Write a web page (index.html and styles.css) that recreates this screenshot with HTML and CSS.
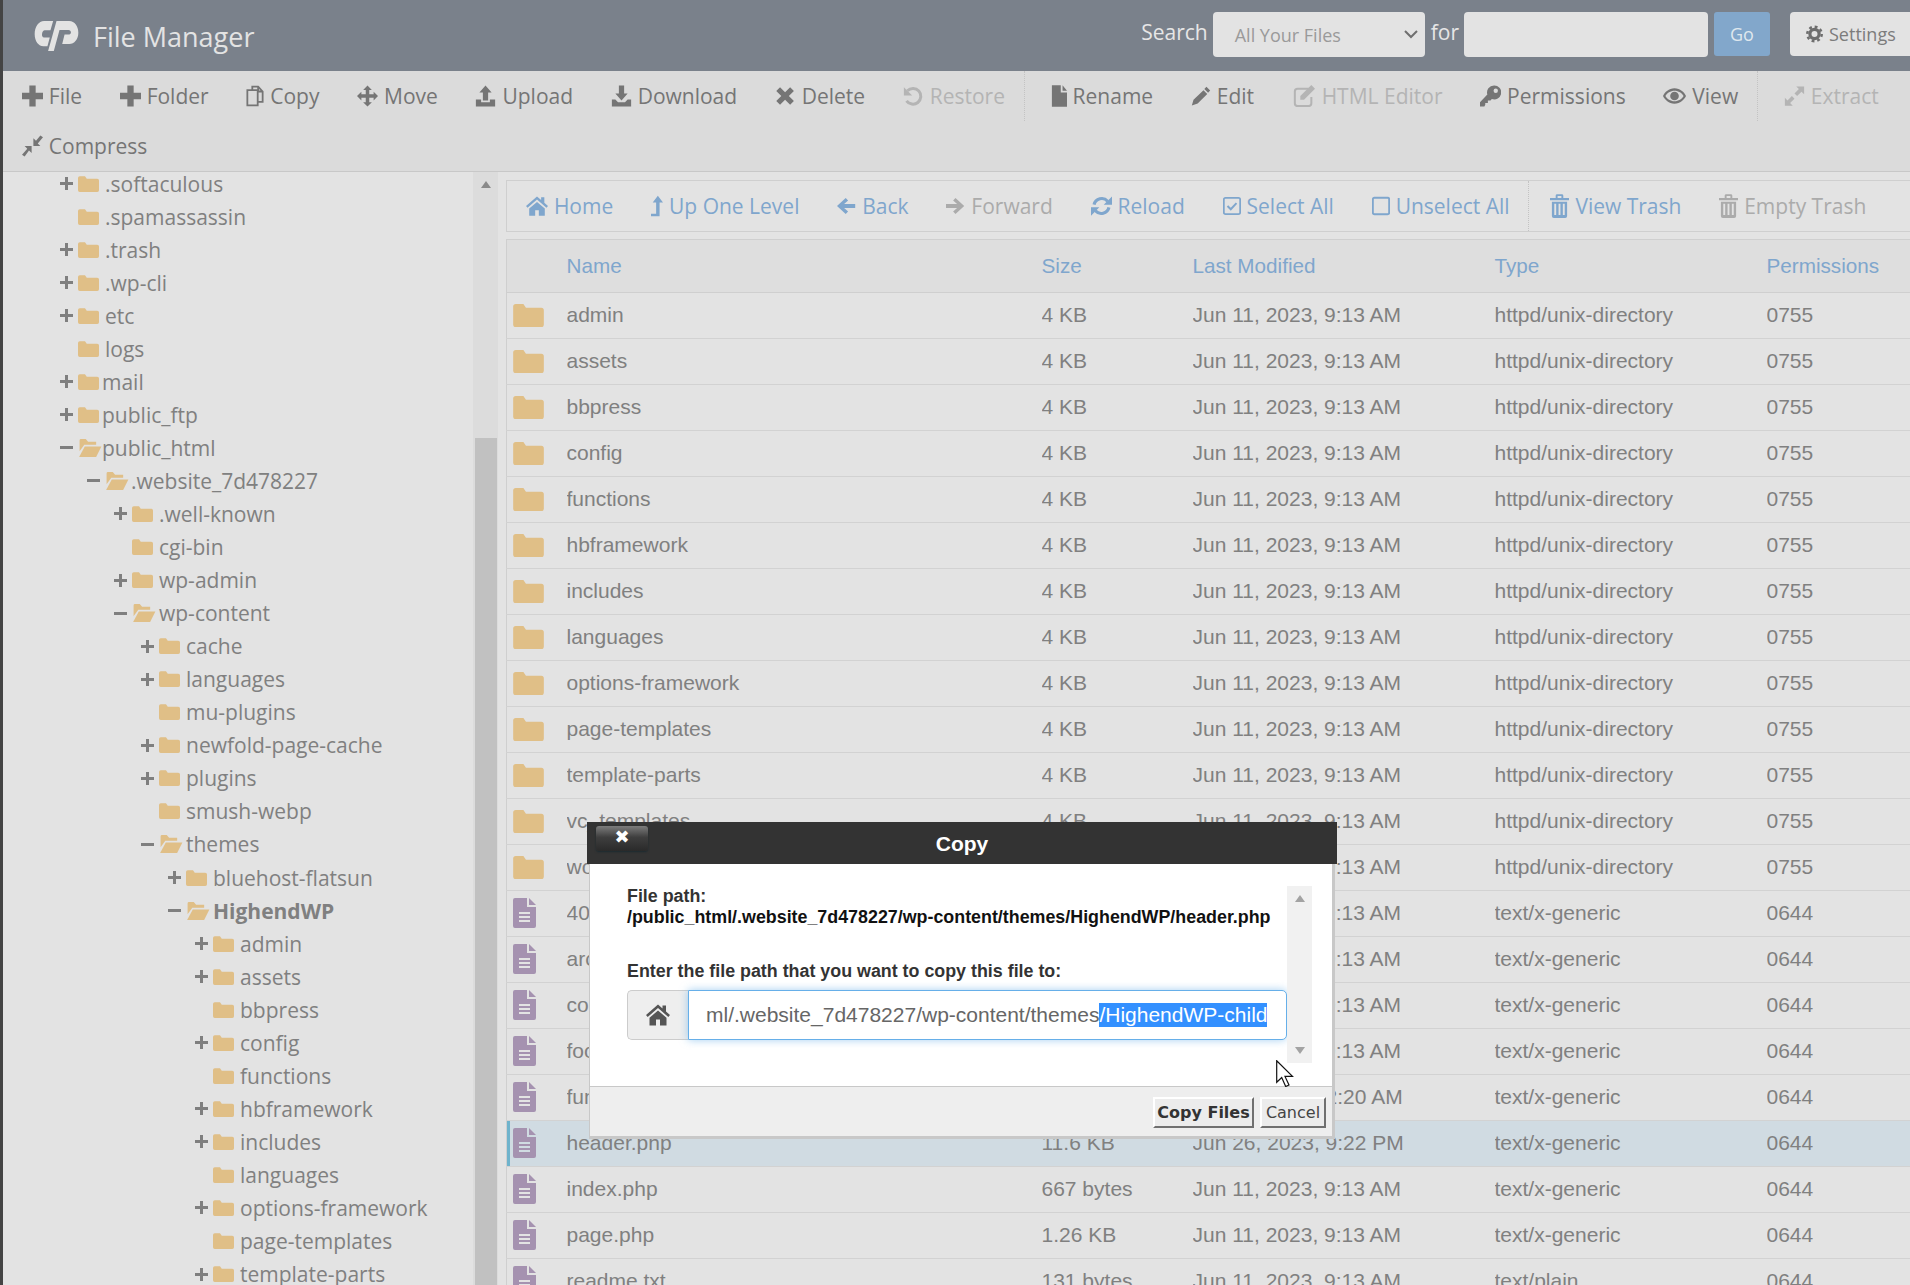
FILE: index.html
```html
<!DOCTYPE html>
<html lang="en">
<head>
<meta charset="utf-8">
<title>File Manager</title>
<link rel="stylesheet" href="styles.css">
</head>
<body>
<svg class="sprite" xmlns="http://www.w3.org/2000/svg">
  <symbol id="plus" viewBox="2 2 20 20"><path d="M9 2h6v7h7v6h-7v7H9v-7H2V9h7z"/></symbol>
  <symbol id="tplus" viewBox="0 0 13 13"><path d="M5 0h3v5h5v3H8v5H5V8H0V5h5z"/></symbol>
  <symbol id="tminus" viewBox="0 0 13 13"><path d="M0 5h13v3H0z"/></symbol>
  <symbol id="copy" viewBox="2 0 20 24"><path d="M9 5V1.500h6.500L20.500 7v11.500H15M15.500 1.500V7h5M3.500 5.500h11.500v17H3.500z" fill="none" stroke="currentColor" stroke-width="2"/></symbol>
  <symbol id="move" viewBox="0 0 24 24"><path d="M12 0l5 5h-3v5h5V7l5 5-5 5v-3h-5v5h3l-5 5-5-5h3v-5H5v3l-5-5 5-5v3h5V5H7z"/></symbol>
  <symbol id="upload" viewBox="0 0 24 24"><path d="M12 0l7 8h-4v9H9V8H5zM1 16h6v3h10v-3h6v8H1z"/></symbol>
  <symbol id="download" viewBox="0 0 24 24"><path d="M9 0h6v9h4l-7 8-7-8h4zM1 16h4l3 3h8l3-3h4v8H1z"/></symbol>
  <symbol id="times" viewBox="0 0 25 25"><path d="M6 2l6 6 6-6 4.500 4.500-6 6 6 6-4.500 4.500-6-6-6 6-4.500-4.500 6-6-6-6z"/></symbol>
  <symbol id="undo" viewBox="1 0 24 24"><path d="M6 6a9 9 0 1 1-1 11.500" fill="none" stroke="currentColor" stroke-width="3.400"/><path d="M2 2v9.500h9.500z"/></symbol>
  <symbol id="file" viewBox="0 0 18 24"><path d="M1 0h10v8h7v16H1zM13 0l5 6h-5z"/></symbol>
  <symbol id="pencil" viewBox="0 0 24 24"><path d="M18.500 1l4.500 4.500-2.500 2.500-4.500-4.500zM15 5l4.500 4.500L8 21l-7 2.500L3 16.500z"/></symbol>
  <symbol id="edit" viewBox="0 0 24 24"><path d="M17 4H5a3 3 0 0 0-3 3v13a3 3 0 0 0 3 3h12a3 3 0 0 0 3-3v-7" fill="none" stroke="currentColor" stroke-width="2.200"/><path d="M20 0l4 4-12 12H8v-4z"/></symbol>
  <symbol id="key" viewBox="0 0 24 24"><path fill-rule="evenodd" d="M16 0a8 8 0 0 0-7.600 10.400L0 19v5h5l1-2v-2h3v-3h3l1.500-1.500A8 8 0 1 0 16 0zm2 3.500a2.500 2.500 0 1 1 0 5 2.500 2.500 0 0 1 0-5z"/></symbol>
  <symbol id="eye" viewBox="0 0 24 16"><path fill-rule="evenodd" d="M12 0C6 0 2 4 0 8c2 4 6 8 12 8s10-4 12-8c-2-4-6-8-12-8zm0 2.500c-4 0-8 2.500-9.500 5.500C4 11 8 13.500 12 13.500S20 11 21.500 8C20 5 16 2.500 12 2.500z"/><circle cx="12" cy="8" r="4.500"/></symbol>
  <symbol id="expand" viewBox="0 0 24 24"><path d="M14 1h9v9l-3-3-5 5-3-3 5-5zM10 23H1v-9l3 3 5-5 3 3-5 5z"/></symbol>
  <symbol id="compress" viewBox="0 0 24 24"><path d="M21 0l3 2-6 7 3 3h-8V3l3 3zM3 24l-3-2 6-7-3-3h8v8l-3-3z"/></symbol>
  <symbol id="home" viewBox="0 1 24 23"><path d="M12 2L0 12.500l1.700 2L12 5.500l10.300 9 1.700-2L20 9V3h-3.500v3z"/><path d="M12 8L3.500 15.300V23H10v-6h4v6h6.500v-7.700z"/></symbol>
  <symbol id="levelup" viewBox="0 0 14 24"><path d="M8 0l6 8h-4v16H0v-3h6V8H2z"/></symbol>
  <symbol id="left" viewBox="0 2 24 21"><path d="M11 2.500L14 5.500 9 10h14v5H9l5 4.500-3 3L0 12.500z"/></symbol>
  <symbol id="right" viewBox="1 2 24 21"><path d="M13 2.500L10 5.500 15 10H1v5h14l-5 4.500 3 3L24 12.500z"/></symbol>
  <symbol id="reload" viewBox="0 0 24 24"><path d="M3.500 10.500A9 9 0 0 1 19 6.500M20.500 13.500A9 9 0 0 1 5 17.500" fill="none" stroke="currentColor" stroke-width="3.600"/><path d="M24 1v9.500h-9.500zM0 23v-9.500h9.500z"/></symbol>
  <symbol id="check" viewBox="1 1 22 22"><rect x="2" y="2" width="20" height="20" rx="2" fill="none" stroke="currentColor" stroke-width="2.200"/><path d="M6.500 12l4 4 7-7.500" fill="none" stroke="currentColor" stroke-width="2.400"/></symbol>
  <symbol id="square" viewBox="1 1 22 22"><rect x="2" y="2" width="20" height="20" rx="2" fill="none" stroke="currentColor" stroke-width="2.400"/></symbol>
  <symbol id="trash" viewBox="0 0 20 25"><path d="M0 4h6V1.500Q6 0 7.500 0h5Q14 0 14 1.500V4h6v2.500H0zM8 2v2h4V2zM2 8h16v15q0 2-2 2H4q-2 0-2-2zM4.500 10v12h2V10zM9 10v12h2V10zM13.500 10v12h2V10z" fill-rule="evenodd"/></symbol>
  <symbol id="cog" viewBox="0 0 24 24"><circle cx="12" cy="12" r="6.500" fill="none" stroke="currentColor" stroke-width="4.500"/><circle cx="12" cy="12" r="10.200" fill="none" stroke="currentColor" stroke-width="3.500" stroke-dasharray="4 4"/></symbol>
  <symbol id="folder" viewBox="0 0 24 18"><path d="M0 2a2 2 0 0 1 2-2h6l2 3h12a2 2 0 0 1 2 2v11a2 2 0 0 1-2 2H2a2 2 0 0 1-2-2z"/></symbol>
  <symbol id="folderopen" viewBox="0 0 24 19"><path d="M1 1.500Q1 0 2.500 0h5L10 3h8.500v3H6L1 13z"/><path d="M6.500 8H24l-5.500 11H.5z"/></symbol>
  <symbol id="doc" viewBox="0 0 23 30"><path fill-rule="evenodd" d="M2 0h12v9h9v19a2 2 0 0 1-2 2H2a2 2 0 0 1-2-2V2a2 2 0 0 1 2-2zM6 14v2h11v-2zM6 18v2h11v-2zM6 22v2h11v-2z"/><path d="M16 0l7 7h-7z"/></symbol>
</svg>

<div class="page">
  <header class="topbar">
    <svg class="logo" viewBox="28 42 134 68" preserveAspectRatio="none"><path d="M85 44H58C42 44 30 56 30 72 30 88 42 98 56 98H68L75 79H58C53 79 51 75 52 71 53 67 56 64 60 64H77z"/><path d="M95 44H133C149 44 160 55 160 69 160 83 148 93 133 93H112L119 73H130C135 73 138 71 138 68 138 65 135 63 131 63H104L87 108H70z"/></svg>
    <h1 class="title">File Manager</h1>
    <form class="search">
      <span class="search-label">Search</span>
      <span class="search-select">All Your Files<svg class="chev" viewBox="0 0 14 9"><path d="M1 1l6 6 6-6" fill="none" stroke="currentColor" stroke-width="2"/></svg></span>
      <span class="search-label for">for</span>
      <span class="search-input"></span>
      <span class="go">Go</span>
    </form>
    <span class="settings"><svg class="ic cog"><use href="#cog"/></svg>Settings</span>
  </header>

  <nav class="toolbar">
    <a class="tool"><svg class="ic"><use href="#plus"/></svg>File</a>
    <a class="tool"><svg class="ic"><use href="#plus"/></svg>Folder</a>
    <a class="tool"><svg class="ic slim"><use href="#copy"/></svg>Copy</a>
    <a class="tool"><svg class="ic"><use href="#move"/></svg>Move</a>
    <a class="tool"><svg class="ic"><use href="#upload"/></svg>Upload</a>
    <a class="tool"><svg class="ic"><use href="#download"/></svg>Download</a>
    <a class="tool"><svg class="ic"><use href="#times"/></svg>Delete</a>
    <a class="tool off"><svg class="ic"><use href="#undo"/></svg>Restore</a>
    <span class="sep"></span>
    <a class="tool"><svg class="ic narrow"><use href="#file"/></svg>Rename</a>
    <a class="tool"><svg class="ic pen"><use href="#pencil"/></svg>Edit</a>
    <a class="tool off"><svg class="ic wide"><use href="#edit"/></svg>HTML Editor</a>
    <a class="tool"><svg class="ic"><use href="#key"/></svg>Permissions</a>
    <a class="tool"><svg class="ic eyeic"><use href="#eye"/></svg>View</a>
    <span class="sep"></span>
    <a class="tool off"><svg class="ic"><use href="#expand"/></svg>Extract</a>
    <a class="tool"><svg class="ic"><use href="#compress"/></svg>Compress</a>
  </nav>

  <main class="main">
    <aside class="tree">
      <ul class="tree-list">
        <li class="node l0"><svg class="tg"><use href="#tplus"/></svg><svg class="fd"><use href="#folder"/></svg><span>.softaculous</span></li>
        <li class="node l0"><span class="tg"></span><svg class="fd"><use href="#folder"/></svg><span>.spamassassin</span></li>
        <li class="node l0"><svg class="tg"><use href="#tplus"/></svg><svg class="fd"><use href="#folder"/></svg><span>.trash</span></li>
        <li class="node l0"><svg class="tg"><use href="#tplus"/></svg><svg class="fd"><use href="#folder"/></svg><span>.wp-cli</span></li>
        <li class="node l0"><svg class="tg"><use href="#tplus"/></svg><svg class="fd"><use href="#folder"/></svg><span>etc</span></li>
        <li class="node l0"><span class="tg"></span><svg class="fd"><use href="#folder"/></svg><span>logs</span></li>
        <li class="node l0 tight"><svg class="tg"><use href="#tplus"/></svg><svg class="fd"><use href="#folder"/></svg><span>mail</span></li>
        <li class="node l0 tight"><svg class="tg"><use href="#tplus"/></svg><svg class="fd"><use href="#folder"/></svg><span>public_ftp</span></li>
        <li class="node l0 open"><svg class="tg"><use href="#tminus"/></svg><svg class="fd"><use href="#folderopen"/></svg><span>public_html</span></li>
        <li class="node l1 open"><svg class="tg"><use href="#tminus"/></svg><svg class="fd"><use href="#folderopen"/></svg><span>.website_7d478227</span></li>
        <li class="node l2"><svg class="tg"><use href="#tplus"/></svg><svg class="fd"><use href="#folder"/></svg><span>.well-known</span></li>
        <li class="node l2"><span class="tg"></span><svg class="fd"><use href="#folder"/></svg><span>cgi-bin</span></li>
        <li class="node l2"><svg class="tg"><use href="#tplus"/></svg><svg class="fd"><use href="#folder"/></svg><span>wp-admin</span></li>
        <li class="node l2 open"><svg class="tg"><use href="#tminus"/></svg><svg class="fd"><use href="#folderopen"/></svg><span>wp-content</span></li>
        <li class="node l3"><svg class="tg"><use href="#tplus"/></svg><svg class="fd"><use href="#folder"/></svg><span>cache</span></li>
        <li class="node l3"><svg class="tg"><use href="#tplus"/></svg><svg class="fd"><use href="#folder"/></svg><span>languages</span></li>
        <li class="node l3"><span class="tg"></span><svg class="fd"><use href="#folder"/></svg><span>mu-plugins</span></li>
        <li class="node l3"><svg class="tg"><use href="#tplus"/></svg><svg class="fd"><use href="#folder"/></svg><span>newfold-page-cache</span></li>
        <li class="node l3"><svg class="tg"><use href="#tplus"/></svg><svg class="fd"><use href="#folder"/></svg><span>plugins</span></li>
        <li class="node l3"><span class="tg"></span><svg class="fd"><use href="#folder"/></svg><span>smush-webp</span></li>
        <li class="node l3 open"><svg class="tg"><use href="#tminus"/></svg><svg class="fd"><use href="#folderopen"/></svg><span>themes</span></li>
        <li class="node l4"><svg class="tg"><use href="#tplus"/></svg><svg class="fd"><use href="#folder"/></svg><span>bluehost-flatsun</span></li>
        <li class="node l4 open current"><svg class="tg"><use href="#tminus"/></svg><svg class="fd"><use href="#folderopen"/></svg><span>HighendWP</span></li>
        <li class="node l5"><svg class="tg"><use href="#tplus"/></svg><svg class="fd"><use href="#folder"/></svg><span>admin</span></li>
        <li class="node l5"><svg class="tg"><use href="#tplus"/></svg><svg class="fd"><use href="#folder"/></svg><span>assets</span></li>
        <li class="node l5"><span class="tg"></span><svg class="fd"><use href="#folder"/></svg><span>bbpress</span></li>
        <li class="node l5"><svg class="tg"><use href="#tplus"/></svg><svg class="fd"><use href="#folder"/></svg><span>config</span></li>
        <li class="node l5"><span class="tg"></span><svg class="fd"><use href="#folder"/></svg><span>functions</span></li>
        <li class="node l5"><svg class="tg"><use href="#tplus"/></svg><svg class="fd"><use href="#folder"/></svg><span>hbframework</span></li>
        <li class="node l5"><svg class="tg"><use href="#tplus"/></svg><svg class="fd"><use href="#folder"/></svg><span>includes</span></li>
        <li class="node l5"><span class="tg"></span><svg class="fd"><use href="#folder"/></svg><span>languages</span></li>
        <li class="node l5"><svg class="tg"><use href="#tplus"/></svg><svg class="fd"><use href="#folder"/></svg><span>options-framework</span></li>
        <li class="node l5"><span class="tg"></span><svg class="fd"><use href="#folder"/></svg><span>page-templates</span></li>
        <li class="node l5"><svg class="tg"><use href="#tplus"/></svg><svg class="fd"><use href="#folder"/></svg><span>template-parts</span></li>
      </ul>
    </aside>
    <div class="tree-scroll"><span class="arrow-up"></span><span class="thumb"></span></div>

    <section class="content">
      <nav class="navbar">
        <a class="tool"><svg class="ic homeic"><use href="#home"/></svg>Home</a>
        <a class="tool"><svg class="ic tiny"><use href="#levelup"/></svg>Up One Level</a>
        <a class="tool"><svg class="ic"><use href="#left"/></svg>Back</a>
        <a class="tool off"><svg class="ic"><use href="#right"/></svg>Forward</a>
        <a class="tool"><svg class="ic reloadic"><use href="#reload"/></svg>Reload</a>
        <a class="tool"><svg class="ic boxic"><use href="#check"/></svg>Select All</a>
        <a class="tool"><svg class="ic boxic"><use href="#square"/></svg>Unselect All</a>
        <span class="sep short"></span>
        <a class="tool"><svg class="ic tall"><use href="#trash"/></svg>View Trash</a>
        <a class="tool off"><svg class="ic tall"><use href="#trash"/></svg>Empty Trash</a>
      </nav>
      <table class="files">
        <colgroup><col class="c-ic"><col class="c-name"><col class="c-size"><col class="c-date"><col class="c-type"><col class="c-perm"></colgroup>
        <thead><tr><th></th><th>Name</th><th>Size</th><th>Last Modified</th><th>Type</th><th>Permissions</th></tr></thead>
        <tbody>
          <tr><td><svg class="f"><use href="#folder"/></svg></td><td>admin</td><td>4 KB</td><td>Jun 11, 2023, 9:13 AM</td><td>httpd/unix-directory</td><td>0755</td></tr>
          <tr><td><svg class="f"><use href="#folder"/></svg></td><td>assets</td><td>4 KB</td><td>Jun 11, 2023, 9:13 AM</td><td>httpd/unix-directory</td><td>0755</td></tr>
          <tr><td><svg class="f"><use href="#folder"/></svg></td><td>bbpress</td><td>4 KB</td><td>Jun 11, 2023, 9:13 AM</td><td>httpd/unix-directory</td><td>0755</td></tr>
          <tr><td><svg class="f"><use href="#folder"/></svg></td><td>config</td><td>4 KB</td><td>Jun 11, 2023, 9:13 AM</td><td>httpd/unix-directory</td><td>0755</td></tr>
          <tr><td><svg class="f"><use href="#folder"/></svg></td><td>functions</td><td>4 KB</td><td>Jun 11, 2023, 9:13 AM</td><td>httpd/unix-directory</td><td>0755</td></tr>
          <tr><td><svg class="f"><use href="#folder"/></svg></td><td>hbframework</td><td>4 KB</td><td>Jun 11, 2023, 9:13 AM</td><td>httpd/unix-directory</td><td>0755</td></tr>
          <tr><td><svg class="f"><use href="#folder"/></svg></td><td>includes</td><td>4 KB</td><td>Jun 11, 2023, 9:13 AM</td><td>httpd/unix-directory</td><td>0755</td></tr>
          <tr><td><svg class="f"><use href="#folder"/></svg></td><td>languages</td><td>4 KB</td><td>Jun 11, 2023, 9:13 AM</td><td>httpd/unix-directory</td><td>0755</td></tr>
          <tr><td><svg class="f"><use href="#folder"/></svg></td><td>options-framework</td><td>4 KB</td><td>Jun 11, 2023, 9:13 AM</td><td>httpd/unix-directory</td><td>0755</td></tr>
          <tr><td><svg class="f"><use href="#folder"/></svg></td><td>page-templates</td><td>4 KB</td><td>Jun 11, 2023, 9:13 AM</td><td>httpd/unix-directory</td><td>0755</td></tr>
          <tr><td><svg class="f"><use href="#folder"/></svg></td><td>template-parts</td><td>4 KB</td><td>Jun 11, 2023, 9:13 AM</td><td>httpd/unix-directory</td><td>0755</td></tr>
          <tr><td><svg class="f"><use href="#folder"/></svg></td><td>vc_templates</td><td>4 KB</td><td>Jun 11, 2023, 9:13 AM</td><td>httpd/unix-directory</td><td>0755</td></tr>
          <tr><td><svg class="f"><use href="#folder"/></svg></td><td>woocommerce</td><td>4 KB</td><td>Jun 11, 2023, 9:13 AM</td><td>httpd/unix-directory</td><td>0755</td></tr>
          <tr><td><svg class="d"><use href="#doc"/></svg></td><td>404.php</td><td>1 KB</td><td>Jun 11, 2023, 9:13 AM</td><td>text/x-generic</td><td>0644</td></tr>
          <tr><td><svg class="d"><use href="#doc"/></svg></td><td>archive.php</td><td>1 KB</td><td>Jun 11, 2023, 9:13 AM</td><td>text/x-generic</td><td>0644</td></tr>
          <tr><td><svg class="d"><use href="#doc"/></svg></td><td>comments.php</td><td>4 KB</td><td>Jun 11, 2023, 9:13 AM</td><td>text/x-generic</td><td>0644</td></tr>
          <tr><td><svg class="d"><use href="#doc"/></svg></td><td>footer.php</td><td>9 KB</td><td>Jun 11, 2023, 9:13 AM</td><td>text/x-generic</td><td>0644</td></tr>
          <tr><td><svg class="d"><use href="#doc"/></svg></td><td>functions.php</td><td>12 KB</td><td>Jun 26, 2023, 2:20 AM</td><td>text/x-generic</td><td>0644</td></tr>
          <tr class="selected"><td><svg class="d"><use href="#doc"/></svg></td><td>header.php</td><td>11.6 KB</td><td>Jun 26, 2023, 9:22 PM</td><td>text/x-generic</td><td>0644</td></tr>
          <tr><td><svg class="d"><use href="#doc"/></svg></td><td>index.php</td><td>667 bytes</td><td>Jun 11, 2023, 9:13 AM</td><td>text/x-generic</td><td>0644</td></tr>
          <tr><td><svg class="d"><use href="#doc"/></svg></td><td>page.php</td><td>1.26 KB</td><td>Jun 11, 2023, 9:13 AM</td><td>text/x-generic</td><td>0644</td></tr>
          <tr><td><svg class="d"><use href="#doc"/></svg></td><td>readme.txt</td><td>131 bytes</td><td>Jun 11, 2023, 9:13 AM</td><td>text/plain</td><td>0644</td></tr>
        </tbody>
      </table>
    </section>
  </main>
</div>

<div class="modal">
  <div class="modal-head">
    <button class="modal-close" type="button">&#x2716;</button>
    <h2 class="modal-title">Copy</h2>
  </div>
  <div class="modal-body">
    <div class="modal-form">
      <p class="path-label">File path:<br><span class="path-value">/public_html/.website_7d478227/wp-content/themes/HighendWP/header.php</span></p>
      <p class="dest-label">Enter the file path that you want to copy this file to:</p>
      <div class="input-group">
        <span class="addon"><svg class="addon-ic"><use href="#home"/></svg></span>
        <div class="dest-input">ml/.website_7d478227/wp-content/themes<span class="sel">/HighendWP-child</span></div>
      </div>
    </div>
    <div class="modal-scroll"><span class="ms-up"></span><span class="ms-down"></span></div>
  </div>
  <div class="modal-foot">
    <button class="btn strong" type="button">Copy Files</button>
    <button class="btn" type="button">Cancel</button>
  </div>
</div>

<svg class="cursor" viewBox="0 0 18 27"><path d="M.7.7v21.600l5-4.800 4 9 3.300-1.500-4-8.600h7.500z" fill="#fff" stroke="#111" stroke-width="1.200"/></svg>
</body>
</html>
```

FILE: styles.css
```css
* { box-sizing: border-box; }
html, body { margin: 0; height: 1285px; overflow: hidden; }
body { background: #444; font-family: "Open Sans", sans-serif; position: relative; }
.sprite { display: none; }
ul, p, h1, h2 { margin: 0; padding: 0; }

.page { margin-left: 3px; height: 1285px; display: flex; flex-direction: column; background: #e3e3e3; }

/* header */
.topbar { height: 71px; flex: none; background: #7a818b; display: flex; align-items: center; color: #e6e6e6; padding-left: 31px; }
.logo { width: 45px; height: 32px; fill: #e3e3e3; flex: none; }
.title { font-size: 27px; font-weight: 400; margin-left: 14px; color: #e3e3e3; position: relative; top: 1px; }
.search { margin-left: auto; display: flex; align-items: flex-start; height: 45px; margin-top: -2px; }
.search-label { font-size: 21px; line-height: 40px; color: #e6e6e6; margin-right: 5px; }
.search-label.for { margin-right: 5px; }
.search-select { width: 212px; height: 45px; background: #e3e3e3; border-radius: 4px; font-size: 18px; color: #9a9a9a; display: flex; align-items: center; padding-left: 22px; position: relative; margin-right: 6px; }
.chev { width: 14px; height: 9px; color: #6f6f6f; position: absolute; right: 7px; top: 18px; }
.search-input { width: 244px; height: 45px; background: #e3e3e3; border-radius: 4px; margin-right: 6px; }
.go { width: 56px; height: 44px; background: #82a7cb; border-radius: 3px; color: #dfe7ee; font-size: 18px; display: flex; align-items: center; justify-content: center; }
.settings { margin-left: 20px; width: 120px; height: 44px; margin-top: -3px; background: #e3e3e3; border-radius: 4px 0 0 4px; color: #7c7c7c; font-size: 18px; display: flex; align-items: center; padding-left: 16px; gap: 6px; flex: none; }
.ic.cog { width: 17px; height: 18px; color: #6e6e6e; }

/* toolbars */
.toolbar { height: 101px; flex: none; background: #dbdbdb; border-bottom: 1px solid #c8c8c8; display: flex; flex-wrap: wrap; align-content: flex-start; color: #757575; font-size: 21px; }
.tool { display: flex; align-items: center; height: 50px; padding: 0 18.8px; gap: 6px; white-space: nowrap; }
.tool.off { color: #b4b4b4; }
.ic { width: 21px; height: 22px; fill: currentColor; flex: none; }
.ic.slim { width: 18px; }
.ic.narrow { width: 16px; }
.ic.pen { width: 20px; }
.ic.wide { width: 24px; }
.ic.eyeic { width: 23px; }
.sep { width: 1px; height: 50px; border-left: 1px dotted #c3c3c3; margin-right: 7px; flex: none; }
.sep.short { margin-right: 2px; }

/* main */
.main { flex: 1; display: flex; min-height: 0; overflow: hidden; }
.tree { width: 470px; flex: none; overflow: hidden; color: #808080; font-size: 21px; }
.tree-list { list-style: none; margin-top: -5px; }
.node { height: 33.06px; display: flex; align-items: center; white-space: nowrap; }
.l0 { padding-left: 57px; }
.l1 { padding-left: 84px; }
.l2 { padding-left: 111px; }
.l3 { padding-left: 138px; }
.l4 { padding-left: 165px; }
.l5 { padding-left: 192px; }
.tg { width: 13px; height: 13px; margin-right: 5px; fill: #7f7f7f; flex: none; display: block; }
.fd { width: 21px; height: 16px; fill: #e0bf87; flex: none; margin-right: 6px; }
.tight .fd { margin-right: 3px; }
.open .fd { width: 24px; height: 18px; margin-right: 3px; }
.l0.open .fd { margin-right: 0; }
.l1.open .fd { margin-right: 2px; }
.current { font-weight: 700; }
.tree-scroll { width: 25px; flex: none; background: #dcdcdc; display: flex; flex-direction: column; align-items: center; padding-top: 9px; }
.arrow-up { width: 0; height: 0; border: 5.5px solid transparent; border-top: 0; border-bottom: 7px solid #8a8a8a; }
.thumb { width: 22px; flex: 1; margin-top: 250px; background: #c1c1c1; }

.content { flex: 1; min-width: 0; padding: 8px 0 0 8px; overflow: hidden; }
.navbar { height: 52px; display: flex; align-items: center; color: #7fa6cd; font-size: 21px; border: 1px solid #cfcfcf; border-right: 0; white-space: nowrap; }
.navbar .tool { padding: 0 18.9px; }
.navbar .ic { width: 19px; }
.navbar .ic.homeic { width: 22px; }
.navbar .ic.tiny { width: 12px; }
.navbar .ic.reloadic { width: 21px; }
.navbar .ic.boxic { width: 18px; }
.navbar .ic.tall { height: 24px; }
.navbar .tool.off { color: #ababab; }
.navbar .sep { height: 50px; }

.files { margin-top: 7px; width: 1404px; table-layout: fixed; border-collapse: collapse; font-family: "Liberation Sans", Arial, sans-serif; font-size: 21px; color: #808080; border-left: 1px solid #cfcfcf; }
.c-ic { width: 60px; }
.c-name { width: 475px; }
.c-size { width: 151px; }
.c-date { width: 302px; }
.c-type { width: 272px; }
.files th { height: 53px; background: #dedede; color: #7fa6cd; font-weight: 400; font-size: 20.7px; text-align: left; border-top: 1px solid #cfcfcf; border-bottom: 1px solid #cfcfcf; padding: 0; }
.files td { height: 46px; padding: 0 0 1px; border-bottom: 1px solid #d2d2d2; white-space: nowrap; overflow: hidden; }
.files svg { display: block; }
.f { width: 31px; height: 23px; fill: #e0bf87; margin-left: 6px; }
.d { width: 23px; height: 30px; fill: #a592b0; margin-left: 6px; }
.selected td { background: #d0dbe2; }
.selected td:first-child { box-shadow: inset 3px 0 0 #6fb3cc; }

/* modal */
.modal { position: absolute; left: 587px; top: 822px; width: 750px; display: flex; flex-direction: column; font-family: "Liberation Sans", Arial, sans-serif; }
.modal-head { height: 42px; background: #333; position: relative; display: flex; align-items: center; justify-content: center; }
.modal-title { color: #fff; font-size: 21px; font-weight: 700; position: relative; top: 1px; }
.modal-close { position: absolute; left: 9px; top: 4px; width: 52px; height: 25px; padding: 0 0 4px; border: 0; border-radius: 3px; background: linear-gradient(#7c7c7c, #3e3e3e 45%, #2a2a2a); box-shadow: 0 1px 2px #1c2a30; color: #fff; font-size: 18px; line-height: 20px; font-family: "DejaVu Sans", sans-serif; }
.modal-body { height: 222px; margin: 0 2px; border-left: 1px solid #c8c8c8; border-right: 3px solid #c8c8c8; background: #fff; display: flex; padding: 22px 0 0 37px; color: #333; }
.modal-form { width: 660px; flex: none; }
.path-label { font-size: 17.85px; line-height: 21px; font-weight: 700; }
.path-value { color: #111; }
.dest-label { font-size: 17.85px; line-height: 21px; font-weight: 700; margin-top: 33px; }
.input-group { display: flex; height: 50px; margin-top: 8px; }
.addon { width: 61px; flex: none; background: #eee; border: 1px solid #ccc; border-right: 0; border-radius: 5px 0 0 5px; display: flex; align-items: center; justify-content: center; }
.addon-ic { width: 24px; height: 24px; fill: #555; }
.dest-input { flex: 1; border: 1px solid #66afe9; border-radius: 0 5px 5px 0; box-shadow: 0 0 9px rgba(102,175,233,.6); background: #fff; font-size: 21px; color: #666; display: flex; align-items: center; padding-left: 17px; white-space: nowrap; }
.sel { background: #3390ff; color: #fff; }
.modal-scroll { width: 25px; height: 177px; background: #f1f1f1; display: flex; flex-direction: column; align-items: center; justify-content: space-between; padding: 9px 0; }
.ms-up { width: 0; height: 0; border: 5.5px solid transparent; border-top: 0; border-bottom: 7px solid #a3a3a3; }
.ms-down { width: 0; height: 0; border: 5.5px solid transparent; border-bottom: 0; border-top: 7px solid #a3a3a3; }
.modal-foot { height: 53px; margin: 0 2px; border: solid #c8c8c8; border-width: 1px 3px 3px 1px; background: #eee; display: flex; justify-content: flex-end; align-items: flex-start; gap: 6px; padding: 10px 6px 0 0; }
.btn { height: 31px; padding: 0; font-family: "DejaVu Sans", sans-serif; font-size: 16px; color: #444; background: #ececec; border: 2px solid; border-color: #fff #707070 #707070 #fff; width: 66px; }
.btn.strong { font-weight: 700; color: #333; width: 101px; }

.cursor { position: absolute; left: 1276px; top: 1060px; width: 18px; height: 27px; }
```
